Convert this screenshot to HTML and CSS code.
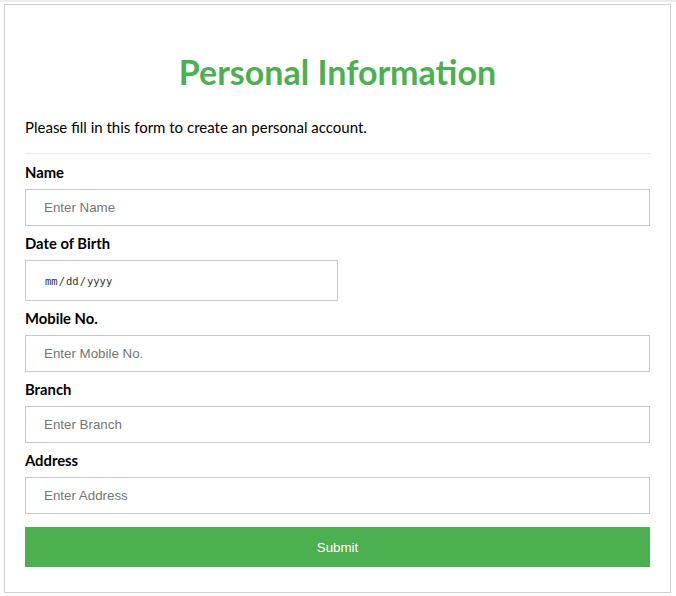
FILE: index.html
```html
<!DOCTYPE html>
<html>
<head>
<meta charset="utf-8">
<link rel="stylesheet" href="styles.css">
</head>
<body>
<div class="topband"></div>
<form class="card">
  <h1 class="title">Personal Information</h1>
  <p class="intro">Please fill in this form to create an personal account.</p>
  <hr class="divider">
  <label class="label" for="name">Name</label>
  <input class="field" id="name" type="text" placeholder="Enter Name">
  <label class="label" for="dob">Date of Birth</label>
  <input class="field date" id="dob" type="date">
  <label class="label" for="mobile">Mobile No.</label>
  <input class="field" id="mobile" type="text" placeholder="Enter Mobile No.">
  <label class="label" for="branch">Branch</label>
  <input class="field" id="branch" type="text" placeholder="Enter Branch">
  <label class="label" for="address">Address</label>
  <input class="field" id="address" type="text" placeholder="Enter Address">
  <button class="submit" type="button">Submit</button>
</form>
</body>
</html>
```
FILE: styles.css
```css
html, body {
  margin: 0;
  padding: 0;
  background: #fff;
}
body {
  padding: 0 5px 0 4px;
  font-family: Lato, "Open Sans", sans-serif;
  color: #000;
}
.topband {
  height: 2px;
  margin: 0 -5px 2px -4px;
  background: #ececec;
}
.card {
  display: block;
  border: 1px solid #cfcfcf;
  padding: 20px 20px 26px 20px;
  height: 589px;
  box-sizing: border-box;
}
.title {
  margin: 27px 0 0 0;
  text-align: center;
  color: #4caf50;
  font-size: 34px;
  line-height: 40px;
  font-weight: 700;
}
.intro {
  margin: 25px 0 0 0;
  font-size: 15px;
  line-height: 20px;
}
.divider {
  border: 0;
  border-top: 1px solid #ececec;
  margin: 16px 0 8px 0;
  height: 0;
}
.label {
  display: block;
  font-size: 14.8px;
  font-weight: 700;
  line-height: 21px;
  margin-bottom: 6px;
}
.field {
  display: block;
  box-sizing: border-box;
  width: 100%;
  height: 37px;
  margin: 0 0 7px 0;
  padding: 0 18px;
  border: 1px solid #c8c8c8;
  font-family: "Liberation Sans", Arial, sans-serif;
  font-size: 13.33px;
  color: #000;
  background: #fff;
  outline: none;
}
.field::placeholder {
  color: #757575;
}
.date {
  width: 313px;
  height: 41px;
  font-family: "DejaVu Sans Mono", monospace;
  font-size: 10.5px;
  color: #333;
}
.date::-webkit-calendar-picker-indicator {
  display: none;
}
.date::-webkit-datetime-edit {
  padding: 0;
}
.submit {
  display: block;
  width: 100%;
  height: 40px;
  margin-top: 13px;
  border: 0;
  background: #4caf50;
  color: #fff;
  font-family: "Liberation Sans", Arial, sans-serif;
  font-size: 13.33px;
}
```
